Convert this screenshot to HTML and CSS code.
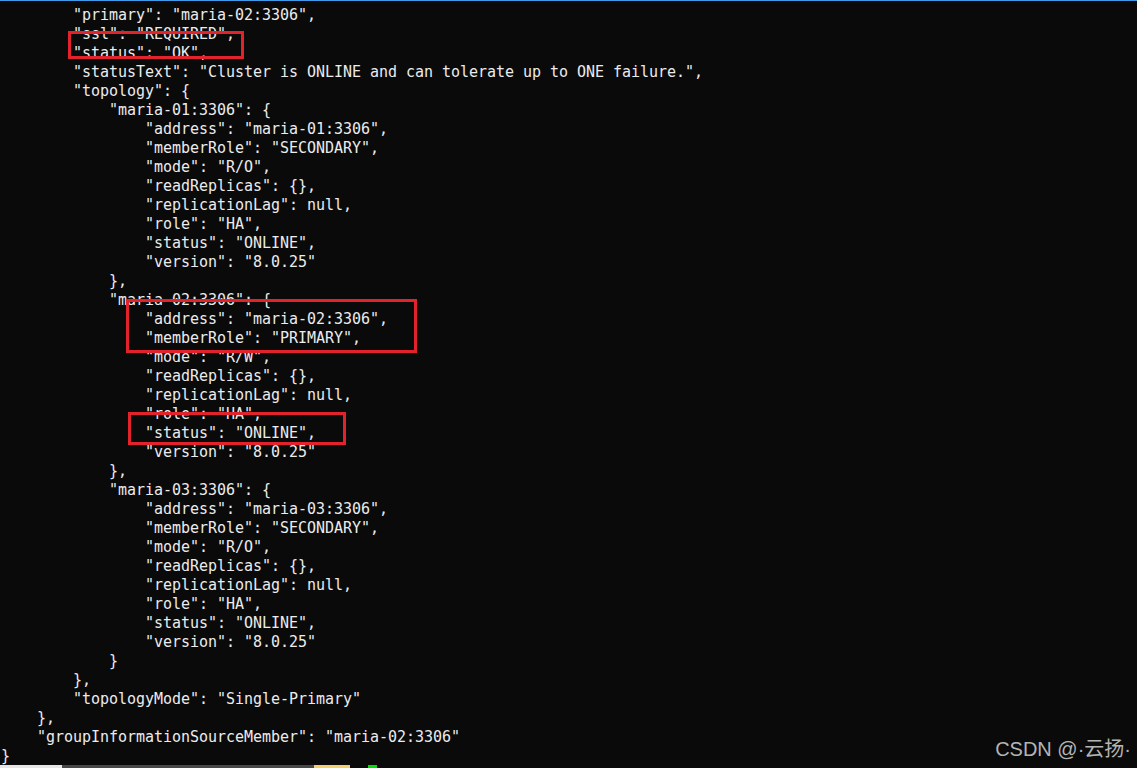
FILE: index.html
```html
<!DOCTYPE html>
<html>
<head>
<meta charset="utf-8">
<link rel="stylesheet" href="styles.css">
</head>
<body>
<div class="term">
<pre class="out">        "primary": "maria-02:3306",
        "ssl": "REQUIRED",
        "status": "OK",
        "statusText": "Cluster is ONLINE and can tolerate up to ONE failure.",
        "topology": {
            "maria-01:3306": {
                "address": "maria-01:3306",
                "memberRole": "SECONDARY",
                "mode": "R/O",
                "readReplicas": {},
                "replicationLag": null,
                "role": "HA",
                "status": "ONLINE",
                "version": "8.0.25"
            },
            "maria-02:3306": {
                "address": "maria-02:3306",
                "memberRole": "PRIMARY",
                "mode": "R/W",
                "readReplicas": {},
                "replicationLag": null,
                "role": "HA",
                "status": "ONLINE",
                "version": "8.0.25"
            },
            "maria-03:3306": {
                "address": "maria-03:3306",
                "memberRole": "SECONDARY",
                "mode": "R/O",
                "readReplicas": {},
                "replicationLag": null,
                "role": "HA",
                "status": "ONLINE",
                "version": "8.0.25"
            }
        },
        "topologyMode": "Single-Primary"
    },
    "groupInformationSourceMember": "maria-02:3306"
}</pre>
<div class="mark mark-1"></div>
<div class="mark mark-2"></div>
<div class="mark mark-3"></div>
<div class="watermark">CSDN @·云扬·</div>
</div>
<div class="statusbar">
<span class="seg seg-light"></span>
<span class="seg seg-dark"></span>
<span class="seg seg-yellow"></span>
<span class="seg seg-gap"></span>
<span class="seg seg-green"></span>
</div>
</body>
</html>
```
FILE: styles.css
```css
html, body {
  margin: 0;
  padding: 0;
  background: #0a0a0a;
  height: 768px;
  overflow: hidden;
}
body {
  display: flex;
  flex-direction: column;
  border-top: 1px solid #3d9be9;
  box-sizing: border-box;
}
.term {
  position: relative;
  flex: 1;
  min-height: 0;
  overflow: hidden;
}
.out {
  margin: 0;
  padding: 5px 0 0 1px;
  font-family: "DejaVu Sans Mono", monospace;
  font-size: 15px;
  line-height: 19px;
  color: #ececec;
  white-space: pre;
  letter-spacing: -0.03px;
}
.mark {
  position: absolute;
  border: 3px solid #e3232b;
  box-sizing: border-box;
}
.mark-1 { left: 68px; top: 30px; width: 176px; height: 28px; }
.mark-2 { left: 126px; top: 298px; width: 291px; height: 54px; }
.mark-3 { left: 128px; top: 411px; width: 218px; height: 33px; }
.watermark {
  position: absolute;
  right: 6px;
  bottom: 3px;
  font-family: "Liberation Sans", "Noto Sans CJK SC", sans-serif;
  font-size: 20px;
  color: #b4b4b4;
}
.statusbar {
  display: flex;
  flex-shrink: 0;
  height: 3px;
}
.seg { display: block; height: 3px; }
.seg-light { width: 62px; background: #e6e6e6; }
.seg-dark { width: 252px; background: #484848; }
.seg-yellow { width: 36px; background: #f7cf6a; }
.seg-gap { width: 18px; }
.seg-green { width: 9px; background: #00e000; }
```
